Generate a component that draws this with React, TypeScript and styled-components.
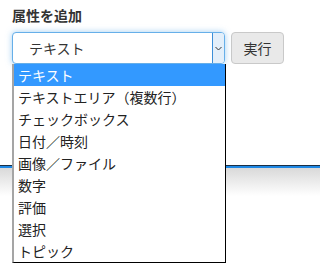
import styled, { createGlobalStyle } from "styled-components";

const GlobalStyle = createGlobalStyle`
    html, body {
        margin: 0;
        background: #fff;
        font-family: "Noto Sans CJK JP", "Noto Sans", sans-serif;
        color: #333;
    }
`;

const Frame = styled.div`
    min-height: 270px;
    position: relative;
`;

const Page = styled.div`
    padding: 5px 10px 0 12px;
    position: relative;
    z-index: 2;
`;

const Title = styled.h3`
    margin: 0;
    font-size: 14px;
    line-height: 20px;
    font-weight: 700;
    color: #333;
`;

const FormRow = styled.div`
    display: flex;
    align-items: stretch;
    gap: 6px;
    margin-top: 7px;
`;

const SelectWrap = styled.div`
    position: relative;
    width: 213px;
    height: 32px;
`;

const SelectBox = styled.div`
    box-sizing: border-box;
    display: flex;
    align-items: center;
    height: 100%;
    border: 1px solid #66afe9;
    border-radius: 4px;
    box-shadow: 0 0 6px rgba(102, 175, 233, 0.6);
    background: #fff;
    overflow: hidden;
`;

const SelectValue = styled.span`
    flex: 1;
    padding-left: 16px;
    font-size: 14px;
    color: #333;
`;

const ArrowBox = styled.span`
    box-sizing: border-box;
    display: flex;
    align-items: center;
    justify-content: center;
    width: 12px;
    height: 100%;
    border-left: 1px solid #3c8fd8;
    background: #e3effa;
`;

const Button = styled.button`
    box-sizing: border-box;
    width: 53px;
    height: 32px;
    padding: 0;
    border: 1px solid #c9c9c9;
    border-radius: 4px;
    background: #e9e9e9;
    font-family: inherit;
    font-size: 14px;
    color: #333;
`;

const List = styled.ul`
    position: absolute;
    top: 32px;
    left: 0;
    box-sizing: border-box;
    width: 214px;
    margin: 0;
    padding: 0;
    list-style: none;
    background: #fff;
    border: 1px solid #000;
    border-left: 2px solid #a5a5a5;
    border-top: none;
    z-index: 5;
`;

const Option = styled.li<{ $active?: boolean }>`
    height: 22px;
    line-height: 22px;
    padding-left: 4px;
    font-size: 14px;
    white-space: nowrap;
    color: ${(p) => (p.$active ? "#fff" : "#222")};
    background: ${(p) => (p.$active ? "#3399ff" : "transparent")};
`;

const Divider = styled.div`
    margin-top: 101px;
    height: 30px;
    border-top: 1px solid #1b2f44;
    background: linear-gradient(#1e88e5 0, #1e88e5 2px, #d9d9d9 2px, #fff 30px);
`;

const options = [
    "テキスト",
    "テキストエリア（複数行）",
    "チェックボックス",
    "日付／時刻",
    "画像／ファイル",
    "数字",
    "評価",
    "選択",
    "トピック",
];

export default function App() {
    return (
        <Frame>
            <GlobalStyle />
            <Page>
                <Title>属性を追加</Title>
                <FormRow>
                    <SelectWrap>
                        <SelectBox>
                            <SelectValue>テキスト</SelectValue>
                            <ArrowBox>
                                <svg width="7" height="5" viewBox="0 0 7 5">
                                    <path d="M0.5 1 L3.5 4 L6.5 1" fill="none" stroke="#333" strokeWidth="1" />
                                </svg>
                            </ArrowBox>
                        </SelectBox>
                        <List>
                            {options.map((o, i) => (
                                <Option key={o} $active={i === 0}>
                                    {o}
                                </Option>
                            ))}
                        </List>
                    </SelectWrap>
                    <Button>実行</Button>
                </FormRow>
            </Page>
            <Divider />
        </Frame>
    );
}
